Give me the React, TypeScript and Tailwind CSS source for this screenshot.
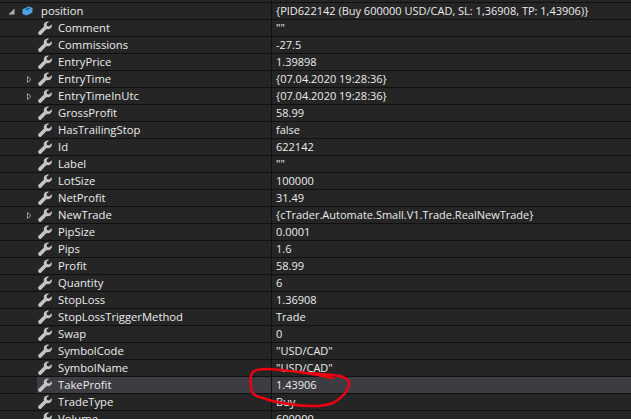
const rows: { name: string; value: string; expandable?: boolean; selected?: boolean }[] = [
  { name: 'Comment', value: '""' },
  { name: 'Commissions', value: '-27.5' },
  { name: 'EntryPrice', value: '1.39898' },
  { name: 'EntryTime', value: '{07.04.2020 19:28:36}', expandable: true },
  { name: 'EntryTimeInUtc', value: '{07.04.2020 19:28:36}', expandable: true },
  { name: 'GrossProfit', value: '58.99' },
  { name: 'HasTrailingStop', value: 'false' },
  { name: 'Id', value: '622142' },
  { name: 'Label', value: '""' },
  { name: 'LotSize', value: '100000' },
  { name: 'NetProfit', value: '31.49' },
  { name: 'NewTrade', value: '{cTrader.Automate.Small.V1.Trade.RealNewTrade}', expandable: true },
  { name: 'PipSize', value: '0.0001' },
  { name: 'Pips', value: '1.6' },
  { name: 'Profit', value: '58.99' },
  { name: 'Quantity', value: '6' },
  { name: 'StopLoss', value: '1.36908' },
  { name: 'StopLossTriggerMethod', value: 'Trade' },
  { name: 'Swap', value: '0' },
  { name: 'SymbolCode', value: '"USD/CAD"' },
  { name: 'SymbolName', value: '"USD/CAD"' },
  { name: 'TakeProfit', value: '1.43906', selected: true },
  { name: 'TradeType', value: 'Buy' },
  { name: 'Volume', value: '600000' },
]

function WrenchIcon() {
  return (
    <svg className="h-[14px] w-[14px] shrink-0" viewBox="0 0 14 14" fill="#c4c4c4">
      <path d="M9.6 0.4a3.9 3.9 0 0 0-3.6 5.2L0.6 10.8a1.6 1.6 0 0 0 0 2.2l0.4 0.4a1.6 1.6 0 0 0 2.2 0l5.3-5.4a3.9 3.9 0 0 0 5.2-4.8L11.2 5.4 9 4.9 8.6 2.8 11.2 0.7a3.9 3.9 0 0 0-1.6-0.3z" />
    </svg>
  )
}

function Row({ name, value, expandable, selected }: (typeof rows)[number]) {
  return (
    <div className="flex h-[17px] shrink-0 border-b border-[#101010]">
      <div className="flex w-[37px] shrink-0 items-center justify-end pr-[5px]">
        {expandable && (
          <svg className="h-[7px] w-[5px]" viewBox="0 0 5 7" fill="none" stroke="#9a9a9a">
            <path d="M0.5 0.5L4 3.5L0.5 6.5Z" />
          </svg>
        )}
      </div>
      <div className={`flex min-w-0 flex-1 ${selected ? 'bg-[#3c3c42]' : ''}`}>
        <div className="flex w-[235px] shrink-0 items-center border-r border-[#101010] pl-[1px]">
          <WrenchIcon />
          <span className="ml-[6px] text-[11.25px] text-[#ececec]">{name}</span>
        </div>
        <div className="flex items-center whitespace-nowrap pl-[4px] text-[#ececec]">{value}</div>
      </div>
    </div>
  )
}

export default function App() {
  return (
    <div className="relative h-[419px] w-[631px] overflow-hidden bg-[#252526] text-[11px] [font-family:'Open_Sans',sans-serif]">
      <div className="flex h-[3px] border-b border-[#101010]">
        <div className="w-[272px] border-r border-[#101010]" />
      </div>
      <div className="flex h-[17px] shrink-0 border-b border-[#101010]">
        <div className="flex w-[272px] shrink-0 items-center border-r border-[#101010]">
          <svg className="ml-[8px] h-[7px] w-[7px]" viewBox="0 0 7 7" fill="#b0b0b0">
            <path d="M6.5 0.5V6.5H0.5Z" />
          </svg>
          <svg className="ml-[7px] h-[10px] w-[11px]" viewBox="0 0 11 10">
            <path d="M0.5 3.2L6.5 0.5L10.5 1.8V6.6L4.5 9.5L0.5 8Z" fill="#4aa3e6" />
            <path d="M3 3.4L6.5 1.8L8.5 2.5L5 4.2Z" fill="#1f5f8f" />
          </svg>
          <span className="ml-[8px] text-[11.25px] text-[#ececec]">position</span>
        </div>
        <div className="flex items-center whitespace-nowrap pl-[4px] text-[#ececec]">
          {'{PID622142 (Buy 600000 USD/CAD, SL: 1,36908, TP: 1,43906)}'}
        </div>
      </div>
      {rows.map((row) => (
        <Row key={row.name} {...row} />
      ))}
      {/* red marker scribble */}
      <svg className="absolute left-0 top-0" width="631" height="419" fill="none">
        <path
          d="M333 378C318 375 304 372 290 371C280 370 272 369 267 369C258 369 254 370 252 373C250 376 250 385 252 392C254 396 258 397 263 398C270 401 276 402 283 403C293 405 303 406 313 406C322 406 328 405 333 403C340 399 345 394 347 390C349 386 350 384 349 382C347 378 343 377 340 376C333 375 327 374 320 374C314 373 308 373 303 373"
          stroke="#ee0010"
          strokeWidth="2.5"
          strokeLinecap="round"
          strokeLinejoin="round"
        />
      </svg>
    </div>
  )
}
